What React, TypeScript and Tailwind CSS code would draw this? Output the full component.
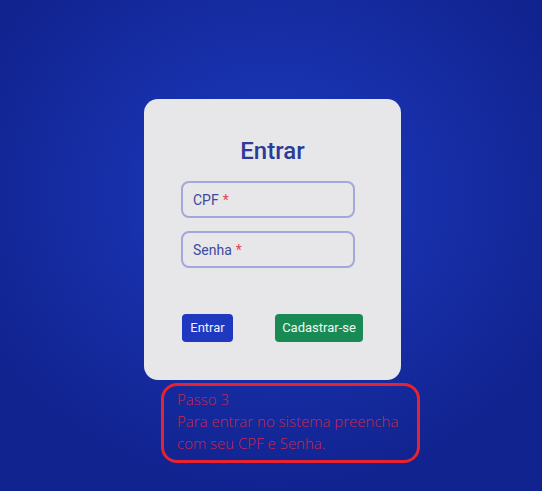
export default function App() {
  return (
    <div className="w-[542px] h-[491px] overflow-hidden bg-[radial-gradient(ellipse_60%_60%_at_50%_40%,#1d3ab8_0%,#1831ad_40%,#11238f_100%)] font-['Roboto',sans-serif]">
      <div className="flex flex-col items-start pl-[144px] pt-[99px]">
        <div className="w-[257px] h-[281px] rounded-[14px] bg-[#e7e7ea] flex flex-col items-center">
          <h1 className="mt-[38px] text-[24px] leading-[28px] font-medium text-[#2a3b98]">Entrar</h1>
          <div className="mt-[16px] mr-[9px] w-[174px] flex flex-col gap-[13px]">
            <div className="h-[37px] rounded-[8px] border-2 border-[#a2a8da] flex items-center pl-[10px] pt-[2px] text-[14px] text-[#3d4a9c]">
              CPF<span className="ml-[4px] text-[#e2454f]">*</span>
            </div>
            <div className="h-[37px] rounded-[8px] border-2 border-[#a2a8da] flex items-center pl-[10px] pt-[2px] text-[14px] text-[#3d4a9c]">
              Senha<span className="ml-[4px] text-[#e2454f]">*</span>
            </div>
          </div>
          <div className="mt-[46px] w-[181px] flex justify-between">
            <button className="w-[51px] h-[28px] rounded-[4px] bg-[#1f38c0] text-[#eef0ff] text-[13px] font-normal">Entrar</button>
            <button className="w-[88px] h-[28px] rounded-[4px] bg-[#1a8a55] text-[#eefaf2] text-[13px] font-normal">Cadastrar-se</button>
          </div>
        </div>
        <div className="mt-[3px] ml-[17px] w-[259px] h-[80px] rounded-[16px] border-[3px] border-[#e8222e] pl-[13px] pt-[2px] font-['Open_Sans',sans-serif] font-light text-[15px] leading-[22px] text-[#cc264c]">
          <div>Passo 3</div>
          <div>Para entrar no sistema preencha</div>
          <div>com seu CPF e Senha.</div>
        </div>
      </div>
    </div>
  );
}
